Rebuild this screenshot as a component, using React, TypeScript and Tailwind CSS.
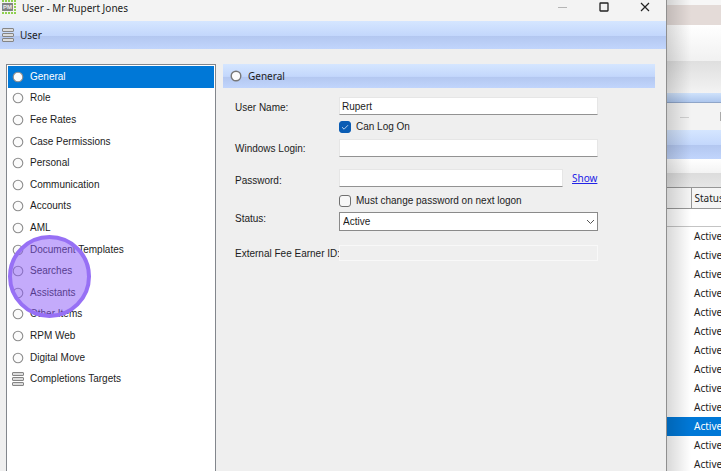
import type { ReactNode } from 'react';

const sections = [
  'General',
  'Role',
  'Fee Rates',
  'Case Permissions',
  'Personal',
  'Communication',
  'Accounts',
  'AML',
  'Document Templates',
  'Searches',
  'Assistants',
  'Other Items',
  'RPM Web',
  'Digital Move',
  'Completions Targets',
];

const SELECTED_ROW = 10;
const rows = Array.from({ length: 13 }, () => 'Active');

const barGradient = 'bg-[linear-gradient(to_bottom,#d5e6ff_0%,#c3d7fc_52%,#b3c7f0_53%,#c1d5fc_100%)]';
const inputClass = 'block h-[18px] border border-[#e6e6e6] border-b-[#929292] bg-white px-0.5 outline-none';

function AppIcon() {
  const dots = [0, 3, 6, 9, 12];
  return (
    <svg width="15" height="15" viewBox="0 0 15 15" className="shrink-0" aria-hidden="true">
      {dots.map(x => dots.map(y => (
        <rect key={`${x}-${y}`} x={x} y={y} width="2" height="2" fill="#8fd04f" />
      )))}
      <rect x="0" y="3" width="11" height="8" rx="1" fill="#808284" />
      <text x="1" y="9" fontSize="6" fontWeight="bold" fill="#eee" fontFamily="Liberation Sans, sans-serif">PM</text>
    </svg>
  );
}

function StackIcon() {
  return (
    <svg width="12" height="14" viewBox="0 0 12 14" className="shrink-0" aria-hidden="true">
      {[0, 5, 10].map(y => (
        <rect key={y} x="0.5" y={y + 0.5} width="11" height="3" rx="0.5" fill="#dcdcdc" stroke="#858585" />
      ))}
    </svg>
  );
}

function RingIcon({ dark = false }: { dark?: boolean }) {
  return (
    <svg width="12" height="12" viewBox="0 0 12 12" className="shrink-0" aria-hidden="true">
      <circle cx="6" cy="6" r="4.8" fill="#fbfbfb" stroke={dark ? '#777' : '#8c8c8c'} strokeWidth={dark ? 1.4 : 1.1} />
    </svg>
  );
}

function CheckRow({ label, checked = false, className }: { label: string; checked?: boolean; className: string }) {
  return (
    <label className={`col-start-2 flex items-center gap-[5px] ${className}`}>
      <span className="relative size-3 shrink-0">
        <input
          type="checkbox"
          defaultChecked={checked}
          className="peer block size-3 appearance-none rounded-[3px] border border-[#707070] bg-[#f7f7f7] checked:border-[#0a5cb4] checked:bg-[#0a5cb4]"
        />
        <svg viewBox="0 0 12 12" className="pointer-events-none absolute inset-0 hidden size-3 peer-checked:block">
          <path d="M3 6.2 5.1 8.2 9 4.2" fill="none" stroke="#b8d2ee" strokeWidth="1" />
        </svg>
      </span>
      {label}
    </label>
  );
}

function Heading({ icon, children }: { icon: ReactNode; children: ReactNode }) {
  return (
    <h2 className={`flex h-6 items-center gap-[6px] pl-[7px] font-['Noto_Sans',sans-serif] text-[10px] ${barGradient}`}>
      {icon}
      {children}
    </h2>
  );
}

function UserForm() {
  return (
    <form className="grid grid-cols-[104px_minmax(0,1fr)] pt-[9px] pr-[57px] pl-3 whitespace-nowrap">
      <label htmlFor="user-name" className="self-center pt-1">User Name:</label>
      <input id="user-name" defaultValue="Rupert" className={inputClass} />
      <CheckRow label="Can Log On" checked className="h-6" />

      <label htmlFor="windows-login" className="self-center pt-0.5">Windows Login:</label>
      <input id="windows-login" className={inputClass} />

      <label htmlFor="password" className="mt-[11px] pt-[7px]">Password:</label>
      <div className="mt-[11px] flex items-center">
        <input id="password" type="password" className={`min-w-0 flex-1 ${inputClass}`} />
        <a href="#show" className="w-[35px] pl-[9px] font-['Noto_Sans',sans-serif] text-[10px] text-[#2222e6] underline">Show</a>
      </div>
      <CheckRow label="Must change password on next logon" className="h-[25px] pt-0.5" />

      <label htmlFor="status" className="self-start pt-px">Status:</label>
      <div className="relative">
        <select id="status" className="block h-[19px] w-full appearance-none border border-[#8a8a8a] bg-white px-[3px] outline-none">
          <option>Active</option>
        </select>
        <svg width="9" height="6" viewBox="0 0 9 6" className="pointer-events-none absolute top-[7px] right-[3px]">
          <path d="M1 1 4.5 4.5 8 1" fill="none" stroke="#555" />
        </svg>
      </div>

      <label htmlFor="fee-earner" className="mt-[14px] self-center pt-0.5">External Fee Earner ID:</label>
      <input id="fee-earner" disabled className="mt-[14px] block h-4 border border-[#f8f8f8] bg-[#efefef]" />
    </form>
  );
}

function UserWindow() {
  return (
    <main className="flex min-w-0 flex-1 flex-col bg-[#efefef]">
      <header className="flex h-[21px] shrink-0 items-start gap-[5px] bg-[#f3f3f3] pl-0.5 font-['Noto_Sans',sans-serif] text-[10px]">
        <AppIcon />
        <h1 className="flex-1 leading-4">User - Mr Rupert Jones</h1>
        <div className="flex gap-[31px] pt-[2px] pr-4">
          <button type="button" aria-label="Minimize">
            <svg width="10" height="10" viewBox="0 0 10 10"><path d="M0 5.5h9" stroke="#b5b5b5" /></svg>
          </button>
          <button type="button" aria-label="Maximize">
            <svg width="10" height="10" viewBox="0 0 10 10"><rect x="1" y="1" width="8" height="8" rx="0.5" fill="none" stroke="#222" strokeWidth="1.3" /></svg>
          </button>
          <button type="button" aria-label="Close">
            <svg width="10" height="10" viewBox="0 0 10 10"><path d="m1 1 8 8M9 1 1 9" stroke="#222" strokeWidth="1.2" /></svg>
          </button>
        </div>
      </header>
      <div className={`flex h-7 shrink-0 items-center gap-[6px] pl-0.5 font-['Noto_Sans',sans-serif] text-[10px] ${barGradient}`}>
        <StackIcon />
        User
      </div>
      <div className="flex min-h-0 flex-1 gap-[7px] pt-[15px] pr-[11px] pl-[6px]">
        <nav className="w-[210px] shrink-0 border border-b-0 border-[#82868c] bg-white px-px pt-px">
          <ul className="grid h-[324px] auto-rows-fr">
            {sections.map((name, i) => (
              <li key={name} className="flex">
                <a
                  href="#section"
                  className={`flex flex-1 items-center gap-[6px] pl-1 ${i === 0 ? 'bg-[#0078d7] text-white' : ''}`}
                >
                  {i === sections.length - 1 ? <StackIcon /> : <RingIcon />}
                  {name}
                </a>
              </li>
            ))}
          </ul>
        </nav>
        <section className="min-w-0 flex-1">
          <Heading icon={<RingIcon dark />}>General</Heading>
          <UserForm />
        </section>
      </div>
    </main>
  );
}

function BackgroundWindow() {
  return (
    <aside className="relative flex w-[55px] shrink-0 flex-col overflow-hidden border-l border-[#8f8f8f] bg-white font-['Noto_Sans',sans-serif] text-[10px]">
      <div className="h-[5px] shrink-0 bg-[#f7f7f7]" />
      <div className="h-5 shrink-0 bg-[#e4dbd8]" />
      <div className="h-9 shrink-0 bg-linear-to-b from-white to-[#f1f1f1]" />
      <div className="h-8 shrink-0 bg-linear-to-b from-[#dfdfdf] to-[#f3f3f3]" />
      <div className="h-[10px] shrink-0 border-b border-[#8fa5c8] bg-linear-to-b from-[#cfe2fb] to-[#adc6ed]" />
      <div className="flex h-[27px] shrink-0 items-center gap-[30px] bg-[#f3f3f3] pl-[13px]">
        <svg width="10" height="10" viewBox="0 0 10 10" className="shrink-0"><path d="M0 5.5h9" stroke="#d0d0d0" /></svg>
        <svg width="10" height="10" viewBox="0 0 10 10" className="shrink-0"><rect x="0.5" y="0.5" width="8" height="8" fill="none" stroke="#aaa" /></svg>
      </div>
      <div className={`h-[29px] shrink-0 ${barGradient}`} />
      <div className="h-[14px] shrink-0 bg-linear-to-b from-white to-[#f3f3f3]" />
      <div className="h-[14px] shrink-0 bg-linear-to-b from-[#dcdcdc] to-[#e6e6e6]" />
      <table className="w-full table-fixed border-collapse text-left">
        <thead>
          <tr className="h-[21px] border-y border-[#969696] bg-[#f5f5f5]">
            <th className="w-6 border-r border-[#969696] p-0" />
            <th className="p-0 pl-[3px] font-normal">Status</th>
          </tr>
        </thead>
        <tbody>
          <tr className="h-[18px] border-b border-[#c4c4c4]">
            <td className="p-0" />
            <td className="p-0" />
          </tr>
          {rows.map((status, i) => (
            <tr key={i} className={`h-[19px] ${i === SELECTED_ROW ? 'bg-[#0078d7] text-white' : ''}`}>
              <td className="p-0" />
              <td className="p-0 pl-[3px]">{status}</td>
            </tr>
          ))}
        </tbody>
      </table>
      <div className="pointer-events-none absolute inset-y-0 left-0 w-6 bg-linear-to-r from-black/15 to-transparent" />
    </aside>
  );
}

export default function App() {
  return (
    <div className="relative flex h-screen overflow-hidden font-['Liberation_Sans',Arial,sans-serif] text-[10px] leading-3 text-[#1c1c1c]">
      <UserWindow />
      <BackgroundWindow />
      {/* click highlight */}
      <div className="pointer-events-none absolute top-[235px] left-2 size-[83px] rounded-full border-4 border-[#9770f5] bg-[#8a58f7]/50" />
    </div>
  );
}
